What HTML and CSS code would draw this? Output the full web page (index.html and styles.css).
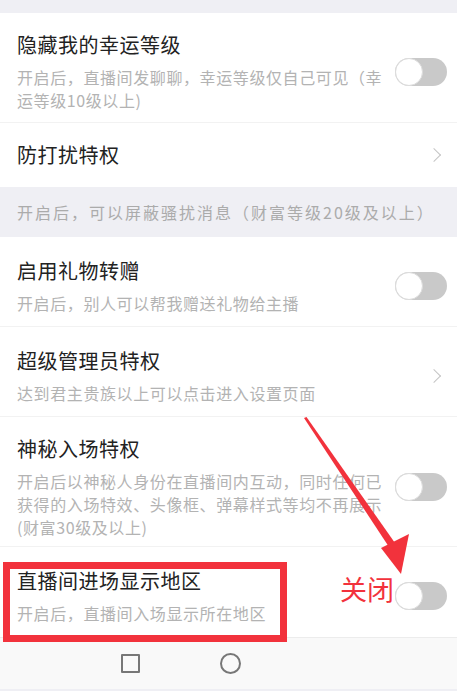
FILE: index.html
```html
<!DOCTYPE html>
<html lang="zh-CN">
<head>
  <meta charset="UTF-8">
  <meta name="viewport" content="width=device-width, initial-scale=1.0">
  <title>隐私设置</title>
  <link rel="stylesheet" href="styles.css">
</head>
<body>
  <div class="page">
    <div class="gap-top"></div>

    <div class="group">
      <div class="row">
        <div class="text">
          <div class="title">隐藏我的幸运等级</div>
          <div class="desc">开启后，直播间发聊聊，幸运等级仅自己可见（幸运等级10级以上)</div>
        </div>
        <span class="switch"></span>
      </div>
      <div class="row link">
        <div class="text">
          <div class="title">防打扰特权</div>
        </div>
        <span class="chevron"></span>
      </div>
    </div>

    <div class="note">开启后，可以屏蔽骚扰消息（财富等级20级及以上）</div>

    <div class="group">
      <div class="row">
        <div class="text">
          <div class="title">启用礼物转赠</div>
          <div class="desc">开启后，别人可以帮我赠送礼物给主播</div>
        </div>
        <span class="switch"></span>
      </div>
      <div class="row">
        <div class="text">
          <div class="title">超级管理员特权</div>
          <div class="desc">达到君主贵族以上可以点击进入设置页面</div>
        </div>
        <span class="chevron"></span>
      </div>
      <div class="row tall">
        <div class="text">
          <div class="title">神秘入场特权</div>
          <div class="desc">开启后以神秘人身份在直播间内互动，同时任何已获得的入场特效、头像框、弹幕样式等均不再展示(财富30级及以上)</div>
        </div>
        <span class="switch"></span>
      </div>
      <div class="row last">
        <div class="text marked">
          <div class="title">直播间进场显示地区</div>
          <div class="desc">开启后，直播间入场显示所在地区</div>
        </div>
        <span class="label-off">关闭</span>
        <span class="switch"></span>
      </div>
    </div>

    <div class="navbar">
      <span class="nav-square"></span>
      <span class="nav-circle"></span>
    </div>

    <!-- annotation arrow -->
    <svg class="arrow" width="457" height="691" viewBox="0 0 457 691">
      <polygon points="304,418 306.5,417 395,543 389,547" fill="#f2323c"/>
      <polygon points="381,548 409,534 401,574" fill="#f2323c"/>
    </svg>
  </div>
</body>
</html>
```

FILE: styles.css
```css
body {
  margin: 0;
  background-color: #efeff4;
  font-family: "Noto Sans CJK SC", "Noto Sans", sans-serif;
}
.page {
  position: relative;
  width: 457px;
  height: 691px;
  overflow: hidden;
}
.gap-top {
  height: 13px;
}
.group {
  background-color: #ffffff;
}
.row {
  display: flex;
  align-items: center;
  min-height: 90px;
  box-sizing: border-box;
  padding: 18px 10px 10px 17px;
  border-bottom: 1px solid #f2f2f2;
}
.row.link {
  min-height: 64px;
  padding-top: 18px;
  padding-bottom: 18px;
  border-bottom: none;
}
.row.tall {
  padding-bottom: 7px;
}
.row.last {
  border-bottom: none;
}
.text {
  width: 369px;
  flex: none;
}
.title {
  font-size: 20px;
  line-height: 28px;
  letter-spacing: 0.5px;
  color: #222222;
}
.desc {
  margin-top: 7px;
  font-size: 16px;
  line-height: 23px;
  letter-spacing: 0.6px;
  color: #b3b3b3;
}
.switch {
  position: relative;
  margin-left: auto;
  width: 52px;
  height: 28px;
  border-radius: 14px;
  background-color: #c9c9c9;
  flex: none;
}
.switch::before {
  content: "";
  position: absolute;
  left: 0;
  top: 0;
  width: 26px;
  height: 26px;
  border-radius: 50%;
  background-color: #ffffff;
  border: 1px solid #dcdcdc;
}
.chevron {
  margin-left: auto;
  margin-right: 8px;
  width: 9px;
  height: 9px;
  border-top: 1.5px solid #c4c4c4;
  border-right: 1.5px solid #c4c4c4;
  transform: rotate(45deg);
  flex: none;
}
.note {
  height: 50px;
  box-sizing: border-box;
  padding: 14px 0 0 17px;
  font-size: 16px;
  line-height: 23px;
  letter-spacing: 2px;
  color: #ababab;
  white-space: nowrap;
}
.marked {
  position: relative;
}
.marked::after {
  content: "";
  position: absolute;
  left: -14px;
  top: -5px;
  width: 270px;
  height: 66px;
  border: 7px solid #f2323c;
}
.label-off {
  margin-left: auto;
  margin-right: 1px;
  margin-top: -14px;
  font-size: 27px;
  line-height: 34px;
  color: #f2323c;
}
.label-off + .switch {
  margin-left: 0;
}
.row.last .text {
  width: 320px;
}
.navbar {
  height: 51px;
  background-color: #f9f9f9;
  border-top: 1px solid #ececec;
  display: flex;
  align-items: center;
}
.nav-square {
  margin-left: 121px;
  width: 15px;
  height: 15px;
  border: 2px solid #777777;
  border-radius: 1px;
}
.nav-circle {
  margin-left: 80px;
  width: 17px;
  height: 17px;
  border: 2px solid #777777;
  border-radius: 50%;
}
.arrow {
  position: absolute;
  left: 0;
  top: 0;
  pointer-events: none;
}
```
